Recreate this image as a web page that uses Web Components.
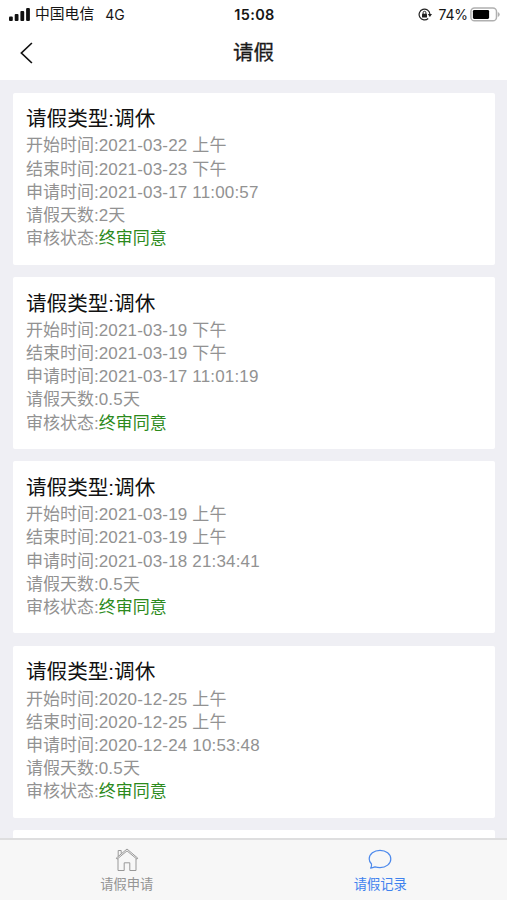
<!DOCTYPE html>
<html lang="zh-CN">
<head>
<meta charset="utf-8">
<title>请假</title>
<style>
html, body {
  margin: 0;
  height: 100%;
  overflow: hidden;
}
body {
  font-family: "Liberation Sans", "Noto Sans CJK SC", sans-serif;
  background: #efeff4;
}
</style>
</head>
<body>
<leave-app></leave-app>

<script>
// Attaches an open shadow root and fills it with the given markup.
function render(el, html) {
  el.attachShadow({ mode: "open" }).innerHTML = html;
}

/* status-bar -- carrier, clock and battery */
class StatusBar extends HTMLElement {
  connectedCallback() {
    render(this, `
    <style>
:host {
  display: grid;
  grid-template-columns: 1fr auto 1fr;
  align-items: center;
  height: 27px;
  padding: 0 7px 0 9px;
  background: #fff;
  color: #161616;
  font-size: 14.8px;
  line-height: 27px;
}
.left, .right {
  display: flex;
  align-items: center;
}
.right {
  justify-content: flex-end;
}
.signal {
  margin-right: 5px;
}
.carrier {
  padding-top: 1px;
}
.net {
  margin-left: 11px;
  font-family: Inter, sans-serif;
  font-size: 14px;
}
.time {
  font: 600 14.5px/27px Inter, sans-serif;
  letter-spacing: 0.35px;
}
.level {
  margin: 0 2px 0 6px;
  font: 14px/27px Inter, sans-serif;
  letter-spacing: -0.1px;
}
svg {
  display: block;
}
    </style>
    <div class="left">
      <svg class="signal" width="21" height="13" viewBox="0 0 21 13" fill="#111">
        <rect x="0" y="8.5" width="3.8" height="4.5" rx="1"/>
        <rect x="5.7" y="6" width="3.8" height="7" rx="1"/>
        <rect x="11.4" y="3" width="3.8" height="10" rx="1"/>
        <rect x="17.1" y="0" width="3.8" height="13" rx="1"/>
      </svg>
      <span class="carrier">中国电信</span>
      <span class="net">4G</span>
    </div>
    <span class="time">15:08</span>
    <div class="right">
      <svg width="14" height="13" viewBox="0 0 14 13" fill="none" stroke="#222" stroke-width="1.2">
        <path d="M10.2 10.5A5.4 5.4 0 1 1 11.9 6"/>
        <path d="M9.8 5.900h4.200l-2.100 3z" fill="#222" stroke="none"/>
        <rect x="4" y="5.700" width="5" height="3.700" rx=".5" fill="#222" stroke="none"/>
        <path d="M5.100 6V4.700a1.400 1.400 0 0 1 2.800 0V6" stroke-width="1"/>
      </svg>
      <span class="level">74%</span>
      <svg width="30" height="15" viewBox="0 0 30 15">
        <rect x=".9" y="1" width="25.6" height="12.800" rx="3.600" fill="#fff" stroke="#b0b0b0" stroke-width="1.500"/>
        <rect x="2.900" y="2.900" width="16.200" height="9" rx="1.300" fill="#000"/>
        <path d="M27.800 5v5q1.900-.8 1.900-2.500t-1.900-2.500z" fill="#b0b0b0"/>
      </svg>
    </div>
    `);
  }
}
customElements.define("status-bar", StatusBar);

/* nav-bar -- back arrow and the slotted page title */
class NavBar extends HTMLElement {
  connectedCallback() {
    render(this, `
    <style>
:host {
  display: grid;
  grid-template-columns: 1fr auto 1fr;
  align-items: center;
  height: 53px;
  padding: 0 19px;
  background: #fff;
  color: #1a1a1a;
  font-size: 20.5px;
  line-height: 53px;
}
.title {
  height: 53px;
  margin-top: -3px;
  -webkit-text-stroke: 0.3px currentColor;
}
svg {
  display: block;
  margin-bottom: 2px;
}
    </style>
    <svg width="15" height="22" viewBox="0 0 15 22" fill="none" stroke="#111" stroke-width="1.7">
      <path d="M12.9 1L2.400 11l10.500 10"/>
    </svg>
    <div class="title"><slot></slot></div>
    `);
  }
}
customElements.define("nav-bar", NavBar);

/*
leave-card -- one leave record

Attributes: type, start, end, applied, days, status
*/
class LeaveCard extends HTMLElement {
  connectedCallback() {
    const attr = (name) => this.getAttribute(name) || "";
    render(this, `
    <style>
:host {
  display: block;
  box-sizing: border-box;
  flex: none;
  height: 172.2px;
  padding: 12.7px 13px 0;
  background: #fff;
  border-radius: 2px;
  color: #929292;
  font-size: 17px;
  line-height: 23.2px;
}
h2 {
  margin: 0 0 1.2px;
  color: #111;
  font-size: 20.6px;
  font-weight: 400;
  line-height: 28px;
}
p {
  margin: 0;
  height: 23.2px;
  white-space: nowrap;
}
.value {
  letter-spacing: 0.17px;
}
.status {
  color: #2c8a1c;
}
    </style>
    <h2>请假类型:${attr("type")}</h2>
    <p>开始时间:<span class="value">${attr("start")}</span></p>
    <p>结束时间:<span class="value">${attr("end")}</span></p>
    <p>申请时间:<span class="value">${attr("applied")}</span></p>
    <p>请假天数:<span class="value">${attr("days")}天</span></p>
    <p>审核状态:<span class="status">${attr("status")}</span></p>
    `);
  }
}
customElements.define("leave-card", LeaveCard);

/* tab-item -- icon slot over a label, blue when it has the active attribute */
class TabItem extends HTMLElement {
  connectedCallback() {
    render(this, `
    <style>
:host {
  display: flex;
  flex: 1;
  flex-direction: column;
  align-items: center;
  padding-top: 8px;
  color: #949494;
  font-size: 13.3px;
  line-height: 20px;
}
:host([active]) {
  color: #3f82ee;
}
.icon {
  height: 27px;
}
    </style>
    <div class="icon"><slot name="icon"></slot></div>
    <slot></slot>
    `);
  }
}
customElements.define("tab-item", TabItem);

class TabBar extends HTMLElement {
  connectedCallback() {
    render(this, `
    <style>
:host {
  display: flex;
  box-sizing: border-box;
  flex: none;
  height: 62.5px;
  border-top: 2px solid #dededf;
  background: #f7f7f7;
}
    </style>
    <slot></slot>
    `);
  }
}
customElements.define("tab-bar", TabBar);

class LeaveApp extends HTMLElement {
  connectedCallback() {
    render(this, `
    <style>
:host {
  display: flex;
  flex-direction: column;
  height: 100vh;
}
main {
  display: flex;
  flex: 1;
  flex-direction: column;
  gap: 12.2px;
  min-height: 0;
  padding: 12.5px 12px 0 13px;
  overflow: hidden;
}
svg {
  display: block;
}
    </style>
    <status-bar></status-bar>
    <nav-bar>请假</nav-bar>
    <main></main>
    <tab-bar>
      <tab-item>
        <svg slot="icon" width="24" height="24" viewBox="0 0 24 24" fill="none" stroke="#999" stroke-width="1">
          <path d="M1.200 10.200L12 1l10.800 9.200-.8 1L12 2.900 2 11.200z"/>
          <path d="M3 10.600v11.900h6.200v-7.700h5.600v7.700H21V10.600M3.200 8.300V2.500h3v3.200"/>
        </svg>
        请假申请
      </tab-item>
      <tab-item active>
        <svg slot="icon" width="24" height="24" viewBox="0 0 24 24" fill="none" stroke="#4c89ec" stroke-width="1.200">
          <path d="M3.500 16C2 14.500 1.200 12.800 1.200 11c0-4.900 4.800-8.700 10.800-8.700S22.800 6.100 22.800 11 18 19.600 12 19.600c-2 0-3.400-.2-5-.7-1.300.5-2.700 1-4.300 1.200.8-1.300 1-2.700.8-4.100z" stroke-linejoin="round"/>
        </svg>
        请假记录
      </tab-item>
    </tab-bar>
    `);

    const records = [
      ["2021-03-22 上午", "2021-03-23 下午", "2021-03-17 11:00:57", "2"],
      ["2021-03-19 下午", "2021-03-19 下午", "2021-03-17 11:01:19", "0.5"],
      ["2021-03-19 上午", "2021-03-19 上午", "2021-03-18 21:34:41", "0.5"],
      ["2020-12-25 上午", "2020-12-25 上午", "2020-12-24 10:53:48", "0.5"],
    ];
    const main = this.shadowRoot.querySelector("main");
    for (const [start, end, applied, days] of records) {
      const card = document.createElement("leave-card");
      card.setAttribute("type", "调休");
      card.setAttribute("start", start);
      card.setAttribute("end", end);
      card.setAttribute("applied", applied);
      card.setAttribute("days", days);
      card.setAttribute("status", "终审同意");
      main.append(card);
    }
    // top edge of the next card, cut off by the tab bar
    const next = document.createElement("div");
    next.style.cssText = "flex: 1; background: #fff; border-radius: 2px 2px 0 0";
    main.append(next);
  }
}
customElements.define("leave-app", LeaveApp);
</script>
</body>
</html>
